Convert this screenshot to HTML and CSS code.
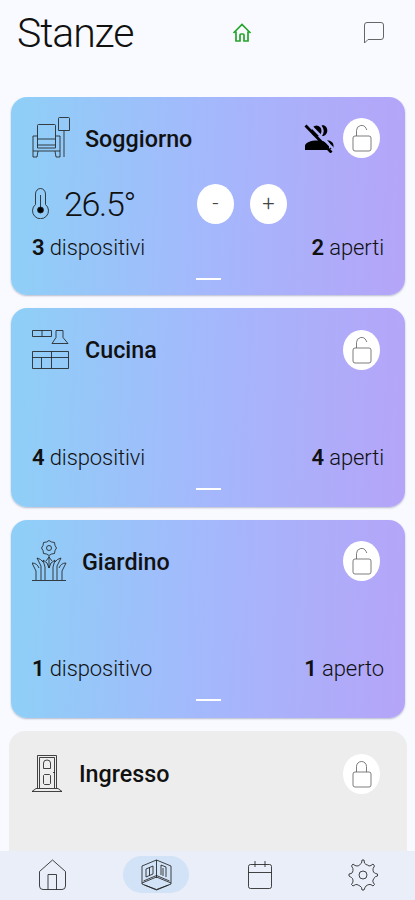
FILE: index.html
```html
<!DOCTYPE html>
<html lang="it">
	<head>
		<meta charset="utf-8">
		<title>Stanze</title>
		<link rel="stylesheet" href="styles.css">
	</head>
	<body>
		<!-- simboli comuni -->
		<svg class="defs">
			<symbol id="unlocked" viewBox="0 0 20 28">
				<rect x="1" y="12" width="18" height="15" rx="2" />
				<path d="M4.500 12V6.500a5 5 0 0 1 9.500-2.200l.8 1.700" />
			</symbol>
			<symbol id="locked" viewBox="0 0 20 28">
				<rect x="1" y="12" width="18" height="15" rx="2" />
				<path d="M4.500 12V6.500a5 5 0 0 1 10 0V12" />
			</symbol>
		</svg>
		<div class="app">
			<header class="top">
				<h1>Stanze</h1>
				<svg class="home" viewBox="0 0 20 20"><path d="M1.500 10L10 1.500 18.500 10M4 8.500V18h4v-6q0-1 1-1h2q1 0 1 1v6h4V8.500" /></svg>
				<svg class="chat" viewBox="0 0 22 24"><path d="M1.500 22V4q0-2.500 2.500-2.500h14q2.500 0 2.500 2.500v12q0 2.500-2.500 2.500H5z" /></svg>
			</header>

			<main class="rooms">
				<section class="card">
					<div class="head">
						<svg class="icon" width="38" height="42" viewBox="0 0 38 42">
							<path d="M5.500 19V8.500q0-1 1-1h16q1 0 1 1V19M27.500.5h9q1 0 1 1v12h-11v-12q0-1 1-1M32 14v26M1 19h4.500v12h18V19H28v15H1zM5.500 22h18M5.500 28h18M1 34v6h4l1-6M28 34v6h-4l-1-6" />
						</svg>
						<h2>Soggiorno</h2>
						<svg class="nobody" width="30" height="30" viewBox="0 0 30 30">
							<ellipse cx="12.500" cy="8" rx="5" ry="5.500" />
							<path d="M17.500 2.500c7-1.500 8.500 10.500 0 11q4.500-5.500 0-11M1 27v-4c0-3.500 6-5.500 12-5.500s12 2 12 5.500v4zM23 17c4.500 1 6.500 2.500 6.500 5.500V26h-3.500v-4q0-2-3-5" />
							<path class="gap" d="M4 0l26 26.500" />
							<path class="slash" d="M1.500 2.500l26 27" />
						</svg>
						<button class="round"><svg class="lock"><use href="#unlocked" /></svg></button>
					</div>
					<div class="climate">
						<svg class="thermo" width="17" height="31" viewBox="0 0 17 31">
							<path d="M3.500 16.500V6a5 5.500 0 0 1 10 0v10.500a8 8 0 1 1-10 0M8.500 7v14" />
							<circle cx="8.500" cy="22" r="3" />
						</svg>
						<span class="temp">26.5°</span>
						<button class="round">-</button>
						<button class="round">+</button>
					</div>
					<p class="stats"><span><b>3</b> dispositivi</span><span><b>2</b> aperti</span></p>
					<i class="handle"></i>
				</section>

				<section class="card">
					<div class="head">
						<svg class="icon" width="38" height="42" viewBox="0 0 38 42">
							<path d="M.5 1.500h19v6H.5zM10 1.500v6M24 1.500h7v7l5 6H20l4-6zM.5 22.500h36v17H.5zM.5 28.500h36M19.500 22.500v17M9.500 28.500v11" />
						</svg>
						<h2>Cucina</h2>
						<button class="round"><svg class="lock"><use href="#unlocked" /></svg></button>
					</div>
					<p class="stats"><span><b>4</b> dispositivi</span><span><b>4</b> aperti</span></p>
					<i class="handle"></i>
				</section>

				<section class="card">
					<div class="head">
						<svg class="icon" width="35" height="42" viewBox="0 0 35 42">
							<path d="M0 40.500h34M13 40V27l-2-7q5 2 6 8 1-6 6-8l-2 7v13M17 16v12M17 17l-3 4M17 17l3 4M9 40V26L5 18q4 1 6 4M4 40v-9L0 23q5 0 7 5M25 40V26l4-8q-4 1-6 4M30 40v-9l4-8q-5 0-7 5" />
							<path d="M17 .5l2.500 1.500 3 .5.5 3L24.500 8 23 10.500l-.5 3-3 .5-2.500 1.500-2.500-1.500-3-.5-.5-3L9.500 8 11 5.500l.5-3 3-.5z" />
							<circle cx="17" cy="8" r="2.500" />
						</svg>
						<h2>Giardino</h2>
						<button class="round"><svg class="lock"><use href="#unlocked" /></svg></button>
					</div>
					<p class="stats"><span><b>1</b> dispositivo</span><span><b>1</b> aperto</span></p>
					<i class="handle"></i>
				</section>

				<section class="card closed">
					<div class="head">
						<svg class="icon" width="30" height="40" viewBox="0 0 30 40">
							<path d="M5.500 34V1.500h19V34M7.500 34V3.500h15V34M0 37.500l4-3h22l4 3zM11.500 14.500V9q0-3 3.500-3t3.500 3v5.500zM12.500 20.500h5l1 1v8l-1 1h-5l-1-1v-8zM21 18.500h2" />
						</svg>
						<h2>Ingresso</h2>
						<button class="round"><svg class="lock"><use href="#locked" /></svg></button>
					</div>
				</section>
			</main>

			<nav class="tabs">
				<a href="#"><svg width="27" height="32" viewBox="0 0 27 32"><path d="M.5 12.500L13.500 1l13 11.500V27q0 3.500-3.500 3.500H4Q.5 30.500.5 27zM9 30.500V15.500h8.500v15" /></svg></a>
				<a href="#" class="current"><svg width="31" height="32" viewBox="0 0 31 32"><path d="M15.500 1L1 7v18l14.500 6L30 25V7zM15.500 1v18M1 24l14.500-6L30 24M2.500 22L15.500 16.500 28.500 22M5 10l7-3v8l-7 3zM8.500 8.500v8M20 16V6l5 2v10M22 17V9M3.500 26l12 4.500 12-4.500" /></svg></a>
				<a href="#"><svg width="24" height="30" viewBox="0 0 24 30"><path d="M2.500 4.500h19q2 0 2 2v20q0 2-2 2h-19q-2 0-2-2v-20q0-2 2-2M.5 12.500h23M7 1v6M17 1v6" /></svg></a>
				<a href="#"><svg width="30" height="32" viewBox="0 0 30 32"><path d="M12 5.500Q14 5 14 1h2q0 4 2 4.500t3 1.500q2 0 4-2l1.500 2q-2 2.500-1.500 4.500t1.500 2.500 3 1v2q-2.500.5-3 1.500T25 21t1.500 4.500l-1.500 1.500q-2-2-4-1.500t-3 1.500-2 4h-2q0-3-2-4t-3-1.500-4 1.500l-1.500-1.500Q5.500 23 5 21t-1.500-2.500T1 17v-2q2.500-.5 3-1t1-2.500T3.500 7L5 5q2 2 4 2t3-1.500" /><circle cx="15" cy="16" r="4" /></svg></a>
			</nav>
		</div>
	</body>
</html>
```
FILE: styles.css
```css
* {
	margin: 0;
	padding: 0;
	box-sizing: border-box;
}

body {
	background-color: #f8faff;
	font-family: Roboto, sans-serif;
	color: #111;
}

svg {
	display: block;
	fill: none;
	stroke: #222;
	stroke-width: .85;
	flex-shrink: 0;
}

.defs {
	display: none;
}

.app {
	height: 900px;
	display: flex;
	flex-direction: column;
	overflow: hidden;
}

.top {
	height: 96.500px;
	flex-shrink: 0;
	display: flex;
	align-items: flex-start;
	padding: 8px 30px 0 17px;
}

.top h1 {
	width: 215px;
	font-size: 41px;
	font-weight: 300;
	letter-spacing: -1.100px;
	line-height: 50px;
}

.home {
	width: 20px;
	height: 20px;
	margin-top: 15px;
	stroke: #25a52b;
	stroke-width: 1.700;
}

.chat {
	width: 22px;
	height: 24px;
	margin: 13px 0 0 auto;
	stroke: #666;
	stroke-width: 1;
}

.rooms {
	flex: 1;
	min-height: 0;
	overflow: hidden;
	display: flex;
	flex-direction: column;
	gap: 13px;
	padding: 0 10px 0 11px;
}

.card {
	height: 198.500px;
	flex-shrink: 0;
	display: flex;
	flex-direction: column;
	padding: 21px 21px 17px;
	border-radius: 16px;
	background: linear-gradient(92deg, #8fcff7 2%, #a4b8fc 50%, #b4a5f8 98%);
	box-shadow: 0 1px 2px rgba(60, 70, 110, .35);
}

.card:first-child {
	padding-bottom: 15px;
}

.closed {
	height: 200px;
	margin: 0 -2px;
	padding: 22px 23px 0;
	background: #ededed;
	box-shadow: none;
}

.head {
	display: flex;
	align-items: center;
	height: 41px;
}

.head h2 {
	margin-left: 15px;
	padding-top: 1px;
	font-size: 23.300px;
	font-weight: 500;
	line-height: 30px;
}

.closed h2 {
	margin-left: 17px;
}

.head .round {
	margin-left: auto;
	margin-right: 4px;
}

.nobody {
	margin-left: auto;
	stroke: none;
	fill: #000;
}

.nobody .gap {
	stroke: #adb0fa;
	stroke-width: 2.500;
}

.nobody .slash {
	stroke: #000;
	stroke-width: 2.800;
}

.head .nobody + .round {
	margin-left: 9px;
}

.round {
	display: flex;
	align-items: center;
	justify-content: center;
	width: 37px;
	height: 40px;
	border: 0;
	border-radius: 50%;
	background: #fff;
	font: 300 22px Roboto, sans-serif;
	color: #444;
}

.lock {
	width: 20px;
	height: 28px;
	stroke: #666;
}

.climate {
	display: flex;
	align-items: center;
	height: 40px;
	margin-top: 25px;
}

.thermo circle {
	fill: #000;
}

.temp {
	width: 133px;
	margin-left: 15px;
	font-size: 34px;
	font-weight: 300;
	letter-spacing: -1.300px;
}

.climate .round + .round {
	margin-left: 16px;
}

.stats {
	display: flex;
	justify-content: space-between;
	margin-top: auto;
	font-size: 22px;
	font-weight: 300;
	letter-spacing: -.1px;
	line-height: 26px;
}

.stats b {
	font-weight: 600;
}

.handle {
	align-self: center;
	width: 25px;
	height: 2px;
	margin-top: 17px;
	background: #fff;
}

.tabs {
	height: 49px;
	flex-shrink: 0;
	display: flex;
	justify-content: space-around;
	align-items: center;
	padding: 0 0 2px 1px;
	background: #e9eef8;
}

.tabs a {
	display: flex;
	align-items: center;
	justify-content: center;
	width: 66px;
	height: 37px;
	border-radius: 19px;
}

.tabs .current {
	background: #d3e3f7;
}
```
